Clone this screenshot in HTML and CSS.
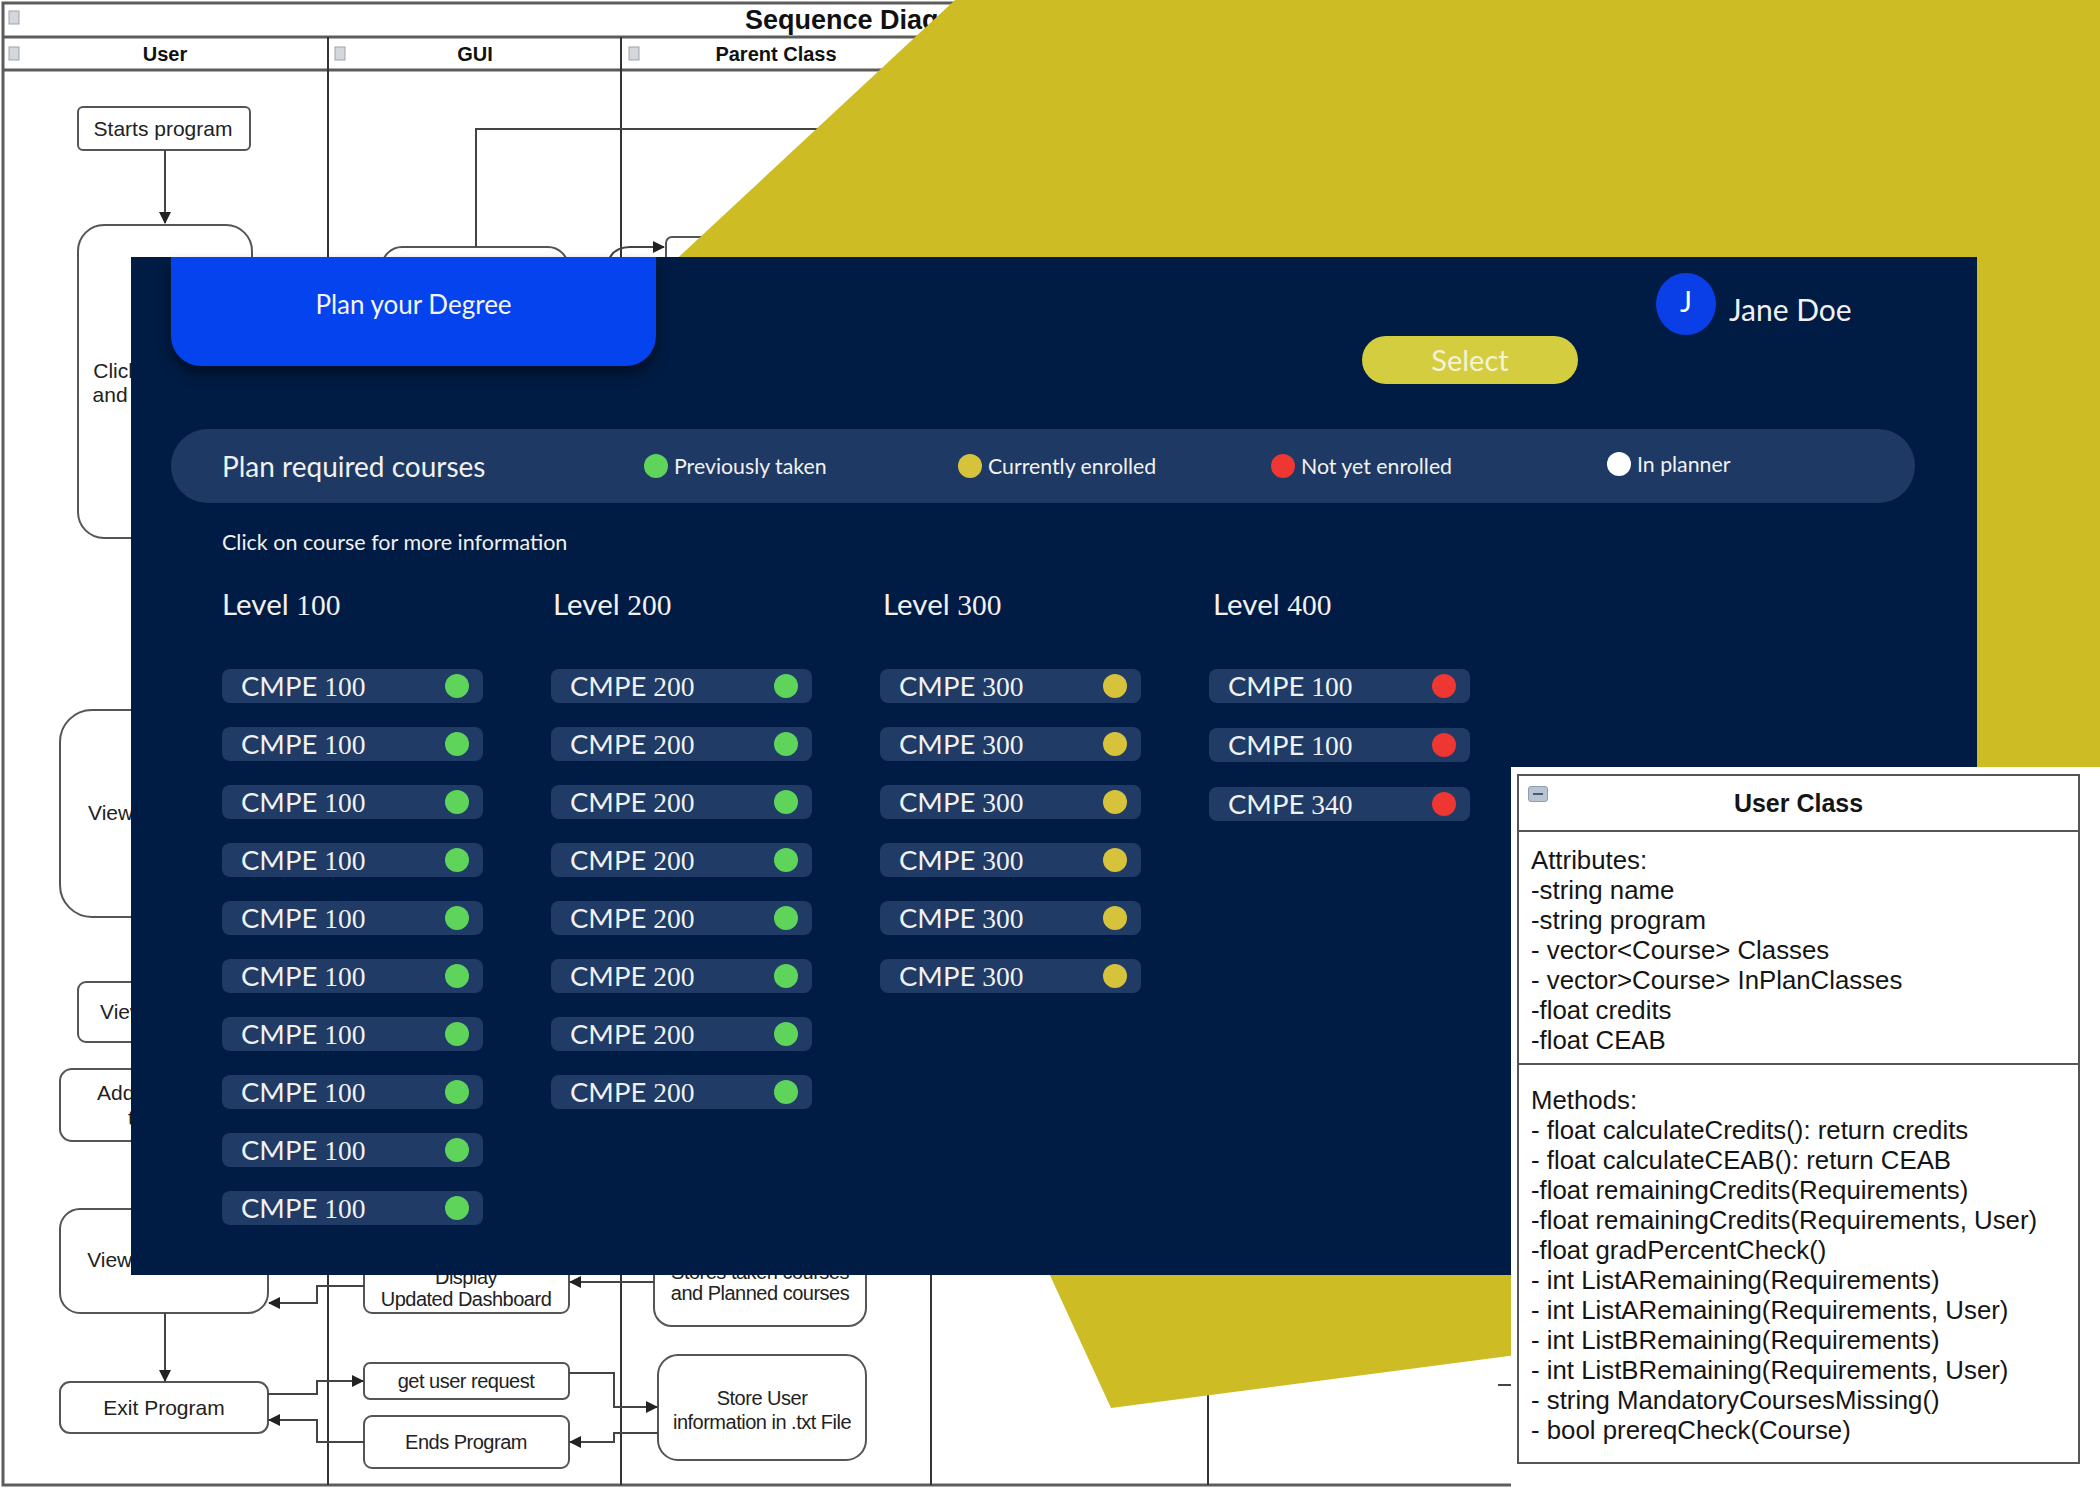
FILE: index.html
```
<!DOCTYPE html>
<html lang="en">
<head>
<meta charset="utf-8">
<title>Plan your Degree</title>
<link rel="stylesheet" href="styles.css">
</head>
<body>
<div class="stage">

  <svg class="diagram" width="2100" height="1500" viewBox="0 0 2100 1500">
    <defs>
      <marker id="ah" markerWidth="12" markerHeight="12" refX="11" refY="6" orient="auto" markerUnits="userSpaceOnUse">
        <path d="M0,0 L12,6 L0,12 z" fill="#222"/>
      </marker>
    </defs>
    <g class="frame">
      <rect x="3" y="3" width="2160" height="1482"/>
      <line x1="3" y1="37" x2="2100" y2="37"/>
      <line x1="3" y1="70" x2="2100" y2="70"/>
    </g>
    <g class="lanes">
      <line x1="328" y1="37" x2="328" y2="1485"/>
      <line x1="621" y1="37" x2="621" y2="1485"/>
      <line x1="931" y1="37" x2="931" y2="1485"/>
      <line x1="1208" y1="37" x2="1208" y2="1485"/>
    </g>
    <g class="icons">
      <rect x="9" y="11" width="10" height="13"/>
      <rect x="9" y="47" width="10" height="13"/>
      <rect x="335" y="47" width="10" height="13"/>
      <rect x="629" y="47" width="10" height="13"/>
    </g>
    <text class="title" x="745" y="29">Sequence Diagram</text>
    <text class="head" x="165" y="61">User</text>
    <text class="head" x="475" y="61">GUI</text>
    <text class="head" x="776" y="61">Parent Class</text>

    <g class="nodes">
      <rect x="78" y="107" width="172" height="43" rx="5"/>
      <rect x="78" y="225" width="174" height="313" rx="26"/>
      <rect x="382" y="247" width="186" height="200" rx="20"/>
      <rect x="666" y="237" width="200" height="100" rx="6"/>
      <rect x="60" y="710" width="200" height="207" rx="32"/>
      <rect x="78" y="982" width="180" height="60" rx="8"/>
      <rect x="60" y="1069" width="200" height="72" rx="12"/>
      <rect x="60" y="1209" width="208" height="104" rx="20"/>
      <rect x="60" y="1382" width="208" height="51" rx="10"/>
      <rect x="364" y="1200" width="205" height="113" rx="8"/>
      <rect x="364" y="1363" width="205" height="36" rx="6"/>
      <rect x="364" y="1416" width="205" height="52" rx="8"/>
      <rect x="654" y="1200" width="212" height="126" rx="18"/>
      <rect x="658" y="1355" width="208" height="105" rx="20"/>
    </g>

    <g class="links">
      <line x1="165" y1="150" x2="165" y2="223" marker-end="url(#ah)"/>
      <polyline points="476,247 476,129 900,129"/>
      <path d="M605,280 Q605,247 630,247 L664,247" marker-end="url(#ah)"/>
      <line x1="165" y1="1313" x2="165" y2="1381" marker-end="url(#ah)"/>
      <polyline points="364,1286 317,1286 317,1303 269,1303" marker-end="url(#ah)"/>
      <line x1="654" y1="1282" x2="570" y2="1282" marker-end="url(#ah)"/>
      <polyline points="268,1394 317,1394 317,1381 363,1381" marker-end="url(#ah)"/>
      <polyline points="364,1442 317,1442 317,1420 269,1420" marker-end="url(#ah)"/>
      <polyline points="569,1373 614,1373 614,1407 657,1407" marker-end="url(#ah)"/>
      <polyline points="658,1433 614,1433 614,1442 570,1442" marker-end="url(#ah)"/>
      <line x1="2080" y1="1396" x2="2100" y2="1388"/>
      <line x1="1498" y1="1385" x2="1511" y2="1385"/>
    </g>

    <g class="labels">
      <text x="163" y="136">Starts program</text>
      <text x="165" y="378">Click on course</text>
      <text x="165" y="402">and add to plan</text>
      <text x="88" y="820" class="start">View planner</text>
      <text x="100" y="1019" class="start">View info</text>
      <text x="97" y="1100" class="start">Add course</text>
      <text x="128" y="1125" class="start">to plan</text>
      <text x="164" y="1267">View Dashboard</text>
      <text x="164" y="1415">Exit Program</text>
      <text x="466" y="1284" class="tight">Display</text>
      <text x="466" y="1306" class="tight">Updated Dashboard</text>
      <text x="466" y="1388" class="tight">get user request</text>
      <text x="466" y="1449" class="tight">Ends Program</text>
      <text x="760" y="1279" class="tight">Stores taken courses</text>
      <text x="760" y="1300" class="tight">and Planned courses</text>
      <text x="762" y="1405" class="tight">Store User</text>
      <text x="762" y="1429" class="tight">information in .txt File</text>
    </g>
  </svg>

  <svg class="accent" width="2100" height="1500" viewBox="0 0 2100 1500">
    <polygon points="955,0 2100,0 2100,1279 1111,1408 611,320"/>
  </svg>

  <main class="planner">
    <header class="topbar">
      <div class="tab">Plan your Degree</div>
      <button class="select">Select</button>
      <div class="user">
        <span class="avatar">J</span>
        <span class="user-name">Jane Doe</span>
      </div>
    </header>

    <section class="legend">
      <h1 class="legend-title">Plan required courses</h1>
      <span class="key"><i class="dot green"></i>Previously taken</span>
      <span class="key"><i class="dot yellow"></i>Currently enrolled</span>
      <span class="key"><i class="dot red"></i>Not yet enrolled</span>
      <span class="key key-up"><i class="dot white"></i>In planner</span>
    </section>

    <p class="hint">Click on course for more information</p>

    <section class="levels">
      <div class="level">
        <h2>Level <span class="num">100</span></h2>
        <div class="course"><span>CMPE <span class="num">100</span></span><i class="dot green"></i></div>
        <div class="course"><span>CMPE <span class="num">100</span></span><i class="dot green"></i></div>
        <div class="course"><span>CMPE <span class="num">100</span></span><i class="dot green"></i></div>
        <div class="course"><span>CMPE <span class="num">100</span></span><i class="dot green"></i></div>
        <div class="course"><span>CMPE <span class="num">100</span></span><i class="dot green"></i></div>
        <div class="course"><span>CMPE <span class="num">100</span></span><i class="dot green"></i></div>
        <div class="course"><span>CMPE <span class="num">100</span></span><i class="dot green"></i></div>
        <div class="course"><span>CMPE <span class="num">100</span></span><i class="dot green"></i></div>
        <div class="course"><span>CMPE <span class="num">100</span></span><i class="dot green"></i></div>
        <div class="course"><span>CMPE <span class="num">100</span></span><i class="dot green"></i></div>
      </div>
      <div class="level">
        <h2>Level <span class="num">200</span></h2>
        <div class="course"><span>CMPE <span class="num">200</span></span><i class="dot green"></i></div>
        <div class="course"><span>CMPE <span class="num">200</span></span><i class="dot green"></i></div>
        <div class="course"><span>CMPE <span class="num">200</span></span><i class="dot green"></i></div>
        <div class="course"><span>CMPE <span class="num">200</span></span><i class="dot green"></i></div>
        <div class="course"><span>CMPE <span class="num">200</span></span><i class="dot green"></i></div>
        <div class="course"><span>CMPE <span class="num">200</span></span><i class="dot green"></i></div>
        <div class="course"><span>CMPE <span class="num">200</span></span><i class="dot green"></i></div>
        <div class="course"><span>CMPE <span class="num">200</span></span><i class="dot green"></i></div>
      </div>
      <div class="level">
        <h2>Level <span class="num">300</span></h2>
        <div class="course"><span>CMPE <span class="num">300</span></span><i class="dot yellow"></i></div>
        <div class="course"><span>CMPE <span class="num">300</span></span><i class="dot yellow"></i></div>
        <div class="course"><span>CMPE <span class="num">300</span></span><i class="dot yellow"></i></div>
        <div class="course"><span>CMPE <span class="num">300</span></span><i class="dot yellow"></i></div>
        <div class="course"><span>CMPE <span class="num">300</span></span><i class="dot yellow"></i></div>
        <div class="course"><span>CMPE <span class="num">300</span></span><i class="dot yellow"></i></div>
      </div>
      <div class="level level-wide">
        <h2>Level <span class="num">400</span></h2>
        <div class="course"><span>CMPE <span class="num">100</span></span><i class="dot red"></i></div>
        <div class="course"><span>CMPE <span class="num">100</span></span><i class="dot red"></i></div>
        <div class="course"><span>CMPE <span class="num">340</span></span><i class="dot red"></i></div>
      </div>
    </section>
  </main>

  <aside class="uml">
    <div class="uml-box">
      <div class="uml-head"><span class="uml-toggle"></span>User Class</div>
      <div class="uml-section">
        <div>Attributes:</div>
        <div>-string name</div>
        <div>-string program</div>
        <div>- vector&lt;Course&gt; Classes</div>
        <div>- vector&gt;Course&gt; InPlanClasses</div>
        <div>-float credits</div>
        <div>-float CEAB</div>
      </div>
      <div class="uml-section uml-methods">
        <div>Methods:</div>
        <div>- float calculateCredits(): return credits</div>
        <div>- float calculateCEAB(): return CEAB</div>
        <div>-float remainingCredits(Requirements)</div>
        <div>-float remainingCredits(Requirements, User)</div>
        <div>-float gradPercentCheck()</div>
        <div>- int ListARemaining(Requirements)</div>
        <div>- int ListARemaining(Requirements, User)</div>
        <div>- int ListBRemaining(Requirements)</div>
        <div>- int ListBRemaining(Requirements, User)</div>
        <div>- string MandatoryCoursesMissing()</div>
        <div>- bool prereqCheck(Course)</div>
      </div>
    </div>
  </aside>

</div>
</body>
</html>
```

FILE: styles.css
```
html, body {
  margin: 0;
  padding: 0;
  background: #ffffff;
}

.stage {
  position: relative;
  width: 2100px;
  height: 1500px;
  overflow: hidden;
  background: #ffffff;
}

/* ---------- background diagram (free canvas) ---------- */
.diagram {
  position: absolute;
  left: 0;
  top: 0;
  font-family: "Liberation Sans", Arial, sans-serif;
}

.diagram .frame {
  fill: none;
  stroke: #5c5c5c;
  stroke-width: 3;
}

.diagram .lanes line {
  stroke: #333;
  stroke-width: 2;
}

.diagram .icons rect {
  fill: #d4d7dc;
  stroke: #9da3ab;
  stroke-width: 1;
}

.diagram .title {
  font-size: 27px;
  font-weight: bold;
  fill: #111;
}

.diagram .head {
  font-size: 20px;
  font-weight: bold;
  fill: #111;
  text-anchor: middle;
}

.diagram .nodes rect {
  fill: #ffffff;
  stroke: #555;
  stroke-width: 2;
}

.diagram .links line,
.diagram .links polyline,
.diagram .links path {
  fill: none;
  stroke: #444;
  stroke-width: 2;
}

.diagram .labels text {
  font-size: 21px;
  fill: #222;
  text-anchor: middle;
}

.diagram .labels text.start {
  text-anchor: start;
}

.diagram .labels text.tight {
  font-size: 20px;
  letter-spacing: -0.5px;
}

/* ---------- yellow accent shape ---------- */
.accent {
  position: absolute;
  left: 0;
  top: 0;
}

.accent polygon {
  fill: #cdbc24;
}

/* ---------- planner window ---------- */
.planner {
  position: absolute;
  left: 131px;
  top: 257px;
  width: 1846px;
  height: 1018px;
  box-sizing: border-box;
  padding-left: 40px;
  background: #011c44;
  color: #f1f1f1;
  font-family: Lato, "Open Sans", sans-serif;
}

.topbar {
  display: flex;
  align-items: flex-start;
  height: 172px;
}

.tab {
  width: 485px;
  height: 109px;
  box-sizing: border-box;
  padding-top: 31px;
  background: #0443ee;
  border-radius: 0 0 30px 30px;
  box-shadow: 0 8px 14px rgba(0, 0, 0, 0.45);
  text-align: center;
  font-size: 26px;
  line-height: 32px;
  color: #f4f4f4;
}

.select {
  margin-left: 706px;
  margin-top: 79px;
  width: 216px;
  height: 48px;
  border: none;
  border-radius: 24px;
  background: #d5cd40;
  color: #f4f3d6;
  font-family: Lato, "Open Sans", sans-serif;
  font-size: 29px;
  line-height: 48px;
  padding: 0;
}

.user {
  margin-left: 78px;
  margin-top: 16px;
  display: flex;
  align-items: center;
  gap: 13px;
}

.avatar {
  width: 60px;
  height: 62px;
  border-radius: 50%;
  background: #0a3fe8;
  color: #ffffff;
  font-size: 28px;
  display: flex;
  align-items: center;
  justify-content: center;
  padding-bottom: 6px;
  box-sizing: border-box;
}

.user-name {
  font-size: 30px;
  padding-top: 10px;
}

.legend {
  width: 1744px;
  height: 74px;
  border-radius: 37px;
  background: #1e3a64;
  display: grid;
  grid-template-columns: 473px 314px 313px 336px auto;
  align-items: center;
}

.legend-title {
  margin: 0;
  padding-left: 51px;
  font-size: 28px;
  font-weight: normal;
  line-height: 34px;
}

.key {
  display: flex;
  align-items: center;
  gap: 6px;
  font-size: 21.3px;
}

.key-up {
  margin-top: -4px;
}

.dot {
  display: inline-block;
  width: 24px;
  height: 24px;
  border-radius: 50%;
  flex: none;
}

.dot.green { background: #5fd45a; }
.dot.yellow { background: #d7c33b; }
.dot.red { background: #ee3632; }
.dot.white { background: #ffffff; }

.hint {
  margin: 27px 0 0 51px;
  font-size: 21.5px;
  line-height: 24px;
}

.levels {
  display: grid;
  grid-template-columns: repeat(4, 261px);
  column-gap: 68px;
  margin: 33px 0 0 51px;
}

.level h2 {
  margin: 0 0 47px;
  font-size: 29.5px;
  font-weight: normal;
  line-height: 34px;
}

.level:nth-child(2) h2 { padding-left: 2px; }
.level:nth-child(3) h2 { padding-left: 3px; }
.level:nth-child(4) h2 { padding-left: 4px; }

.num {
  font-family: "Liberation Serif", "Times New Roman", serif;
}

.course {
  height: 34px;
  margin-bottom: 24px;
  box-sizing: border-box;
  padding: 0 14px 0 19px;
  border-radius: 8px;
  background: #1f3b66;
  display: flex;
  align-items: center;
  justify-content: space-between;
  font-size: 27.5px;
  line-height: 34px;
}

.level-wide .course {
  margin-bottom: 25px;
}

/* ---------- UML class card ---------- */
.uml {
  position: absolute;
  left: 1511px;
  top: 767px;
  width: 589px;
  height: 733px;
  box-sizing: border-box;
  padding: 7px 0 0 6px;
  background: #ffffff;
  font-family: "Liberation Sans", Arial, sans-serif;
  color: #151515;
}

.uml-box {
  width: 563px;
  box-sizing: border-box;
  border: 2px solid #555;
  font-size: 25.8px;
}

.uml-head {
  position: relative;
  height: 54px;
  border-bottom: 2px solid #555;
  display: flex;
  align-items: center;
  justify-content: center;
  font-weight: bold;
  font-size: 25px;
}

.uml-toggle {
  position: absolute;
  left: 9px;
  top: 10px;
  width: 20px;
  height: 16px;
  border-radius: 3px;
  background: #b9c4d3;
  border: 1px solid #8e9bb0;
  box-sizing: border-box;
}

.uml-toggle::after {
  content: "";
  position: absolute;
  left: 4px;
  right: 4px;
  top: 6px;
  height: 2px;
  background: #4c5870;
}

.uml-section {
  padding: 13px 12px 8px;
  line-height: 30px;
  border-bottom: 2px solid #555;
}

.uml-methods {
  padding: 20px 12px 17px;
  border-bottom: none;
}
```
